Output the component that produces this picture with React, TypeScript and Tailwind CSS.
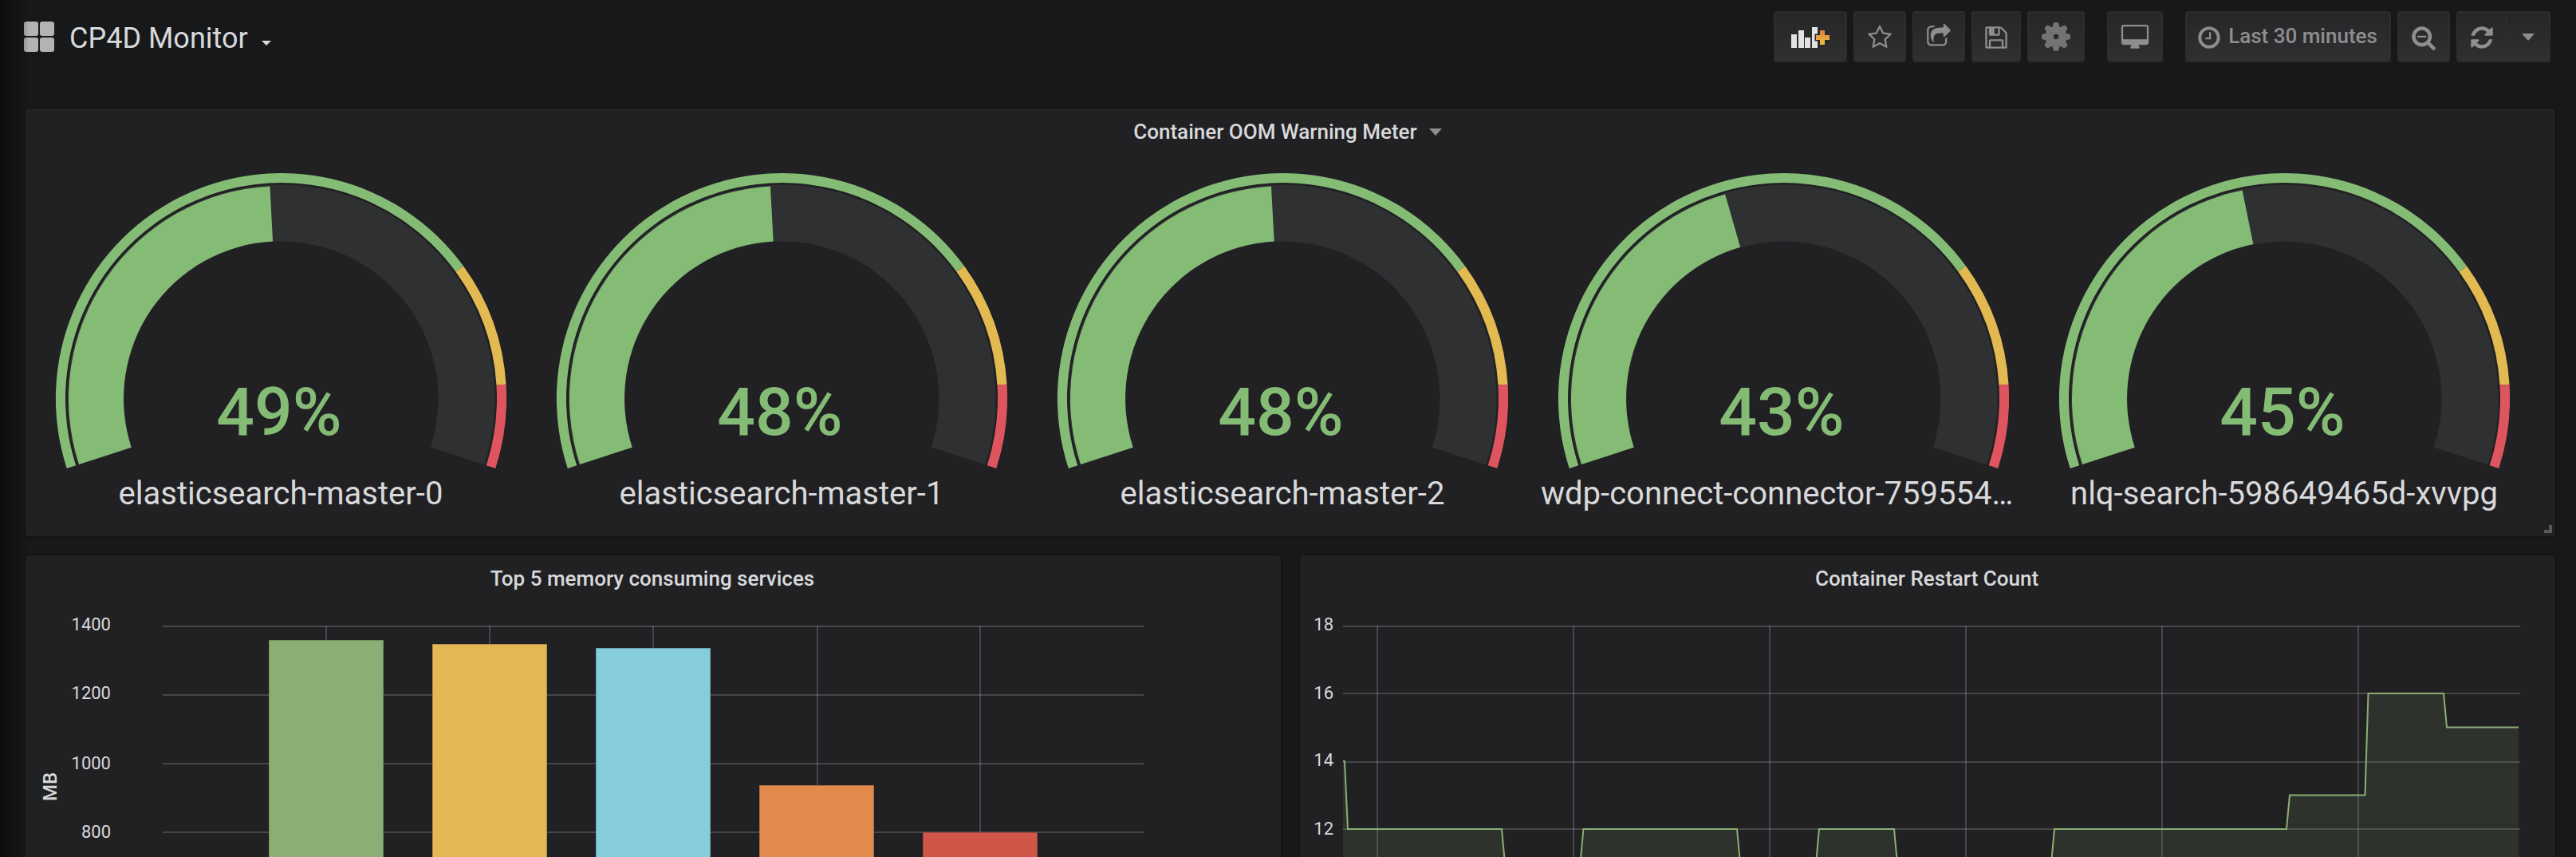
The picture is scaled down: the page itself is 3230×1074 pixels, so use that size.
import React from "react";

const ICONS = {
  star: "M1201 1004l306-297-422-62-189-382-189 382-422 62 306 297-73 421 378-199 377 199zm527-357q0 22-26 48l-363 354 86 500q1 7 1 20 0 50-41 50-19 0-40-12l-449-236-449 236q-22 12-40 12-21 0-31.5-14.5t-10.5-35.5q0-6 2-20l86-500-364-354q-25-27-25-48 0-37 56-46l502-73 225-455q19-41 49-41t49 41l225 455 502 73q56 9 56 46z",
  share:
    "M1472 989v259q0 119-84.5 203.5t-203.5 84.5h-832q-119 0-203.5-84.5t-84.5-203.5v-832q0-119 84.5-203.5t203.5-84.5h255q13 0 22.5 9.5t9.5 22.5q0 27-26 32-77 26-133 60-10 4-16 4h-112q-66 0-113 47t-47 113v832q0 66 47 113t113 47h832q66 0 113-47t47-113v-214q0-19 18-29 28-13 54-37 16-16 35-8 21 9 21 29zm237-496l-384 384q-18 19-45 19-12 0-25-5-39-17-39-59v-192h-160q-323 0-438 131-119 137-74 473 3 23-20 34-8 2-12 2-16 0-26-13-10-14-21-31t-39.5-68.5-49.5-99.5-38.5-114-17.5-122q0-49 3.5-91t14-90 28-88 47-81.5 68.5-74 94.5-61.5 124.5-48.5 159.5-30.5 196.5-11h160v-192q0-42 39-59 13-5 25-5 26 0 45 19l384 384q19 19 19 45t-19 45z",
  save: "M512 1536h768v-384h-768v384zm896 0h128v-896q0-14-10-38.5t-20-34.5l-281-281q-10-10-34-20t-39-10v416q0 40-28 68t-68 28h-576q-40 0-68-28t-28-68v-416h-128v1280h128v-416q0-40 28-68t68-28h832q40 0 68 28t28 68v416zm-384-928v-320q0-13-9.5-22.5t-22.5-9.5h-192q-13 0-22.5 9.5t-9.5 22.5v320q0 13 9.5 22.5t22.5 9.5h192q13 0 22.5-9.5t9.5-22.5zm640 32v928q0 40-28 68t-68 28h-1344q-40 0-68-28t-28-68v-1344q0-40 28-68t68-28h928q40 0 88 20t76 48l280 280q28 28 48 76t20 88z",
  desktop:
    "M1728 992v-832q0-13-9.5-22.5t-22.5-9.5h-1600q-13 0-22.5 9.5t-9.5 22.5v832q0 13 9.5 22.5t22.5 9.5h1600q13 0 22.5-9.5t9.5-22.5zm128-832v1088q0 66-47 113t-113 47h-544q0 37 16 77.5t32 71 16 43.5q0 26-19 45t-45 19h-512q-26 0-45-19t-19-45q0-14 16-44t32-70 16-78h-544q-66 0-113-47t-47-113v-1088q0-66 47-113t113-47h1600q66 0 113 47t47 113z",
  clock:
    "M1024 544v448q0 14-9 23t-23 9h-320q-14 0-23-9t-9-23v-64q0-14 9-23t23-9h224v-352q0-14 9-23t23-9h64q14 0 23 9t9 23zm416 352q0-148-73-273t-198-198-273-73-273 73-198 198-73 273 73 273 198 198 273 73 273-73 198-198 73-273zm224 0q0 209-103 385.5t-279.5 279.5-385.5 103-385.5-103-279.5-279.5-103-385.5 103-385.5 279.5-279.5 385.5-103 385.5 103 279.5 279.5 103 385.5z",
  zoomOut:
    "M1088 800v64q0 13-9.5 22.5t-22.5 9.5h-576q-13 0-22.5-9.5t-9.5-22.5v-64q0-13 9.5-22.5t22.5-9.5h576q13 0 22.5 9.5t9.5 22.5zm128 32q0-185-131.5-316.5t-316.5-131.5-316.5 131.5-131.5 316.5 131.5 316.5 316.5 131.5 316.5-131.5 131.5-316.5zm512 832q0 53-37.5 90.5t-90.5 37.5q-54 0-90-38l-343-342q-179 124-399 124-143 0-273.5-55.5t-225-150-150-225-55.5-273.5 55.5-273.5 150-225 225-150 273.5-55.5 273.5 55.5 225 150 150 225 55.5 273.5q0 220-124 399l343 343q37 37 37 90z",
  refresh:
    "M1639 1056q0 5-1 7-64 268-268 434.5t-478 166.5q-146 0-282.5-55t-243.5-157l-129 129q-19 19-45 19t-45-19-19-45v-448q0-26 19-45t45-19h448q26 0 45 19t19 45-19 45l-137 137q71 66 161 102t187 36q134 0 250-65t186-179q11-17 53-117 8-23 30-23h192q13 0 22.5 9.5t9.5 22.5zm25-800v448q0 26-19 45t-45 19h-448q-26 0-45-19t-19-45 19-45l138-138q-148-137-349-137-134 0-250 65t-186 179q-11 17-53 117-8 23-30 23h-199q-13 0-22.5-9.5t-9.5-22.5v-7q65-268 270-434.5t480-166.5q146 0 284 55.5t245 156.5l130-129q19-19 45-19t45 19 19 45z",
};

function Icon({ name, className = "mt-0.5" }: { name: keyof typeof ICONS; className?: string }) {
  return (
    <svg viewBox="0 0 1792 1792" className={`size-8 shrink-0 overflow-visible fill-[#8e8e8e] ${className}`}>
      <path d={ICONS[name]} />
    </svg>
  );
}

function Cog() {
  return (
    <svg viewBox="-18 -18 36 36" className="size-9 fill-[#737373] stroke-[#737373]">
      <circle r="8.2" fill="none" strokeWidth="10" />
      {[0, 45, 90, 135, 180, 225, 270, 315].map((a) => (
        <path key={a} d="M-4 -11L-2 -17H2L4 -11Z" strokeWidth="2" strokeLinejoin="round" transform={`rotate(${a})`} />
      ))}
    </svg>
  );
}

function AddPanelIcon() {
  return (
    <svg viewBox="0 0 48 26" className="mt-0.5 h-[26px] w-12">
      <defs>
        <linearGradient id="plus" x1="0" y1="0" x2="0" y2="1">
          <stop offset="0" stopColor="#df7f45" />
          <stop offset="1" stopColor="#efc23c" />
        </linearGradient>
      </defs>
      <g fill="#e3e3e3">
        <rect x="0" y="9" width="7" height="17" />
        <rect x="9" y="4" width="7" height="22" />
        <rect x="17" y="13" width="7" height="13" />
        <rect x="26" y="0" width="7" height="26" />
      </g>
      <path d="M31 10h5v-6h6v6h6v6h-6v6h-6v-6h-5z" stroke="#29292b" strokeWidth="3" />
      <path d="M31 10h5v-6h6v6h6v6h-6v6h-6v-6h-5z" fill="url(#plus)" />
    </svg>
  );
}

function NavButton({ className = "", children }: { className?: string; children: React.ReactNode }) {
  return (
    <button
      className={`flex h-16 shrink-0 items-center justify-center rounded-sm border-2 border-[#2d2d2f] bg-linear-to-b from-[#262628] to-[#303032] ${className}`}
    >
      {children}
    </button>
  );
}

function Panel({ className = "", children }: { className?: string; children: React.ReactNode }) {
  return <section className={`relative overflow-hidden rounded-md border-2 border-[#141414] bg-[#212124] ${className}`}>{children}</section>;
}

function PanelTitle({ children }: { children: React.ReactNode }) {
  return <h2 className="relative flex h-14 items-center justify-center pt-0.5 pr-0.5 text-[26px] font-medium">{children}</h2>;
}

/** Point on a circle around the origin at a share of the 216° sweep. */
function point(r: number, share: number) {
  const a = ((162 + share * 216) * Math.PI) / 180;
  return `${r * Math.cos(a)} ${r * Math.sin(a)}`;
}

function band(inner: number, outer: number, from: number, to: number) {
  const large = (to - from) * 216 > 180 ? 1 : 0;
  return `M${point(outer, from)}A${outer} ${outer} 0 ${large} 1 ${point(outer, to)}L${point(inner, to)}A${inner} ${inner} 0 ${large} 0 ${point(inner, from)}Z`;
}

const GAUGES = [
  { name: "elasticsearch-master-0", label: "49%", value: 0.486, long: false },
  { name: "elasticsearch-master-1", label: "48%", value: 0.4855, long: false },
  { name: "elasticsearch-master-2", label: "48%", value: 0.4855, long: false },
  { name: "wdp-connect-connector-759554…", label: "43%", value: 0.426, long: true },
  { name: "nlq-search-598649465d-xvvpg", label: "45%", value: 0.447, long: false },
];

function Gauge({ name, label, value, long }: (typeof GAUGES)[number]) {
  return (
    <div className="flex w-[608px] flex-col items-center">
      <div className="relative">
        <svg viewBox="-283.5 -282.6 566 372" className="h-[372px] w-[566px]">
          <path d={band(197, 268, 0, 1)} fill="#2f3032" />
          <path d={band(197.5, 266.5, 0, value)} fill="#85bc75" />
          <path d={band(270.5, 282.6, 0, 0.75)} fill="#85bc75" />
          <path d={band(270.5, 282.6, 0.75, 0.9)} fill="#e3b952" />
          <path d={band(270.5, 282.6, 0.9, 1)} fill="#df555f" />
        </svg>
        <div className="absolute top-[250px] right-1 left-0 text-center text-[84px] leading-[100px] font-medium text-[#85bc75]">{label}</div>
      </div>
      <div className={`w-full text-[40px] leading-[60px] whitespace-nowrap ${long ? "text-left" : "text-center"}`}>{name}</div>
    </div>
  );
}

const BARS = [
  { x: 133, top: 18, fill: "#8bae74", edge: "#6f8b5e" },
  { x: 338, top: 23, fill: "#e2b754", edge: "#b09046" },
  { x: 543, top: 28, fill: "#86cddc", edge: "#6ba1ad" },
  { x: 748, top: 200, fill: "#e2894d", edge: "#b06e41" },
  { x: 953, top: 259, fill: "#cf5648", edge: "#a2483e" },
];

function AxisLabel({ children, className }: { children: React.ReactNode; className: string }) {
  return <div className={`flex items-center justify-end text-[22px] leading-none ${className}`}>{children}</div>;
}

function MemoryChart() {
  return (
    <div className="flex">
      <div className="flex w-[45px] justify-end pt-[217px]">
        <span className="h-[35px] rotate-180 text-[24px] leading-[28px] font-medium [writing-mode:vertical-rl]">MB</span>
      </div>
      <div className="-mt-3 flex w-[62px] flex-col">
        <AxisLabel className="h-[86px]">1400</AxisLabel>
        <AxisLabel className="h-[86px]">1200</AxisLabel>
        <AxisLabel className="h-[90px]">1000</AxisLabel>
        <AxisLabel className="h-[82px]">800</AxisLabel>
      </div>
      <svg viewBox="0 0 1230 290" className="mt-[32px] ml-[65px] h-[290px] w-[1230px]">
        {[0, 86, 172, 258].map((y) => (
          <rect key={y} y={y} width="1230" height="2" fill="#464648" />
        ))}
        {[204, 409, 614, 820, 1024].map((x) => (
          <rect key={x} x={x} width="2" height="290" fill="#c8c8d0" fillOpacity="0.22" />
        ))}
        {BARS.map((b) => (
          <rect key={b.x} x={b.x + 0.5} y={b.top + 0.5} width="143" height="300" fill={b.fill} stroke={b.edge} />
        ))}
      </svg>
    </div>
  );
}

const SERIES =
  "0,170 2,170 6,255 199,255 203,298 297.5,298 301.4,255 494,255 498,298 593,298 597,255 691,255 695,298 888,298 892,255 1183,255 1187,212.5 1281.5,212.5 1285.5,85 1380,85 1384,127.5 1474,127.5";

function RestartChart() {
  return (
    <div className="flex">
      <div className="-mt-3 flex w-[42px] flex-col">
        <AxisLabel className="h-[86px]">18</AxisLabel>
        <AxisLabel className="h-[86px]">16</AxisLabel>
        <AxisLabel className="h-[82px]">14</AxisLabel>
        <AxisLabel className="h-[90px]">12</AxisLabel>
      </div>
      <svg viewBox="0 0 1476 290" className="mt-[32px] ml-3 h-[290px] w-[1476px]">
        {[0, 84, 170, 254].map((y) => (
          <rect key={y} y={y} width="1476" height="2" fill="#464648" />
        ))}
        {[42, 288, 534, 780, 1026, 1272].map((x) => (
          <rect key={x} x={x} width="2" height="290" fill="#c8c8d0" fillOpacity="0.22" />
        ))}
        <polygon points={`${SERIES} 1474,300 0,300`} fill="#8bae74" fillOpacity="0.12" />
        <polyline points={SERIES} fill="none" stroke="#8bae74" strokeWidth="2" />
      </svg>
    </div>
  );
}

export default function App() {
  return (
    <div className="relative h-[1074px] w-[3230px] overflow-hidden bg-[#17181a] font-['Roboto',sans-serif] text-[#d8d9da]">
      <div className="absolute inset-y-0 left-0 w-9 bg-linear-to-r from-[#0b0c0c] to-transparent" />
      <header className="flex h-[134px] items-start justify-between pt-3.5 pr-8 pl-[30px]">
        <div className="flex h-16 items-center">
          <div className="grid size-[38px] grid-cols-2 gap-0.5">
            <i className="rounded-[3px] bg-[#b3b3b3]" />
            <i className="rounded-[3px] bg-[#b3b3b3]" />
            <i className="rounded-[3px] bg-[#b3b3b3]" />
            <i className="rounded-[3px] bg-[#b3b3b3]" />
          </div>
          <h1 className="mt-[3px] ml-[19px] text-[36px]">CP4D Monitor</h1>
          <svg viewBox="0 0 12 6" className="mt-[15px] ml-[17px] h-1.5 w-3 fill-[#d8d9da]">
            <path d="M0 0h12l-6 6z" />
          </svg>
        </div>
        <div className="flex gap-2">
          <NavButton className="w-[92px]">
            <AddPanelIcon />
          </NavButton>
          <NavButton className="w-[66px]">
            <Icon name="star" />
          </NavButton>
          <NavButton className="w-[66px]">
            <Icon name="share" className="" />
          </NavButton>
          <NavButton className="w-[62px]">
            <Icon name="save" />
          </NavButton>
          <NavButton className="w-[72px]">
            <Cog />
          </NavButton>
          <NavButton className="ml-5 w-[70px]">
            <Icon name="desktop" />
          </NavButton>
          <NavButton className="ml-5 w-[258px] gap-2 pr-[3px] text-[26px] font-medium text-[#8e8e8e]">
            <Icon name="clock" />
            <span className="-mt-0.5">Last 30 minutes</span>
          </NavButton>
          <NavButton className="w-[66px]">
            <Icon name="zoomOut" />
          </NavButton>
          <div className="flex">
            <NavButton className="w-16 rounded-r-none">
              <Icon name="refresh" className="mt-px" />
            </NavButton>
            <NavButton className="w-[54px] rounded-l-none border-l-0">
              <svg viewBox="0 0 16 9" className="h-[9px] w-4 fill-[#8e8e8e]">
                <path d="M0 0h16l-8 9z" />
              </svg>
            </NavButton>
          </div>
        </div>
      </header>

      <main className="grid grid-cols-[1578px_1578px] gap-x-5 gap-y-5 px-[30px]">
        <Panel className="col-span-2 h-[540px]">
          <PanelTitle>
            <span className="relative -left-[18px]">Container OOM Warning Meter</span>
            <svg viewBox="0 0 16 9" className="absolute top-[25px] left-[1760px] h-[9px] w-4 fill-[#8e8e8e]">
              <path d="M0 0h16l-8 9z" />
            </svg>
          </PanelTitle>
          <div className="flex gap-5 pt-[25px] pl-4">
            {GAUGES.map((g) => (
              <Gauge key={g.name} {...g} />
            ))}
          </div>
          <i className="absolute right-1 bottom-1 size-2.5 border-r-4 border-b-4 border-[#59595b]" />
        </Panel>
        <Panel className="h-[400px]">
          <PanelTitle>Top 5 memory consuming services</PanelTitle>
          <MemoryChart />
        </Panel>
        <Panel className="h-[400px]">
          <PanelTitle>Container Restart Count</PanelTitle>
          <RestartChart />
        </Panel>
      </main>
    </div>
  );
}
